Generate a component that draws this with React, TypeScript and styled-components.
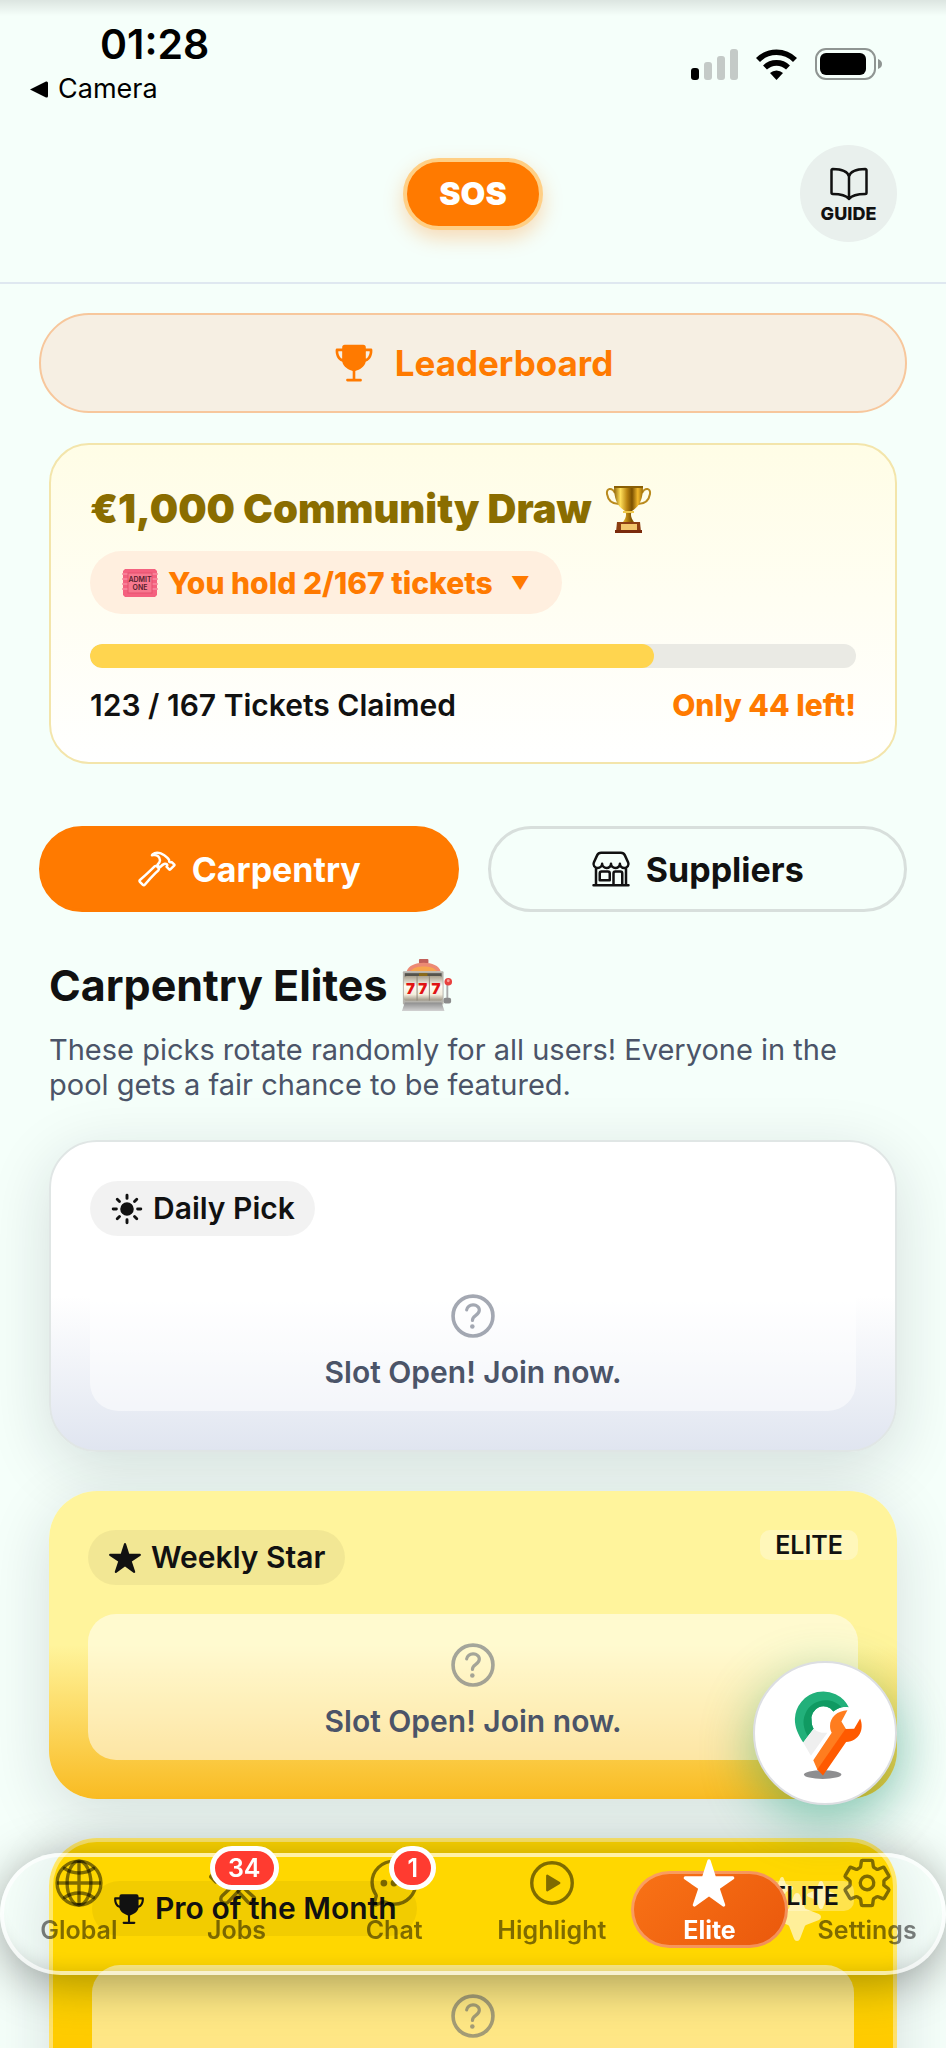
import type { ReactNode } from 'react';
import styled, { createGlobalStyle, css } from 'styled-components';
import {
  IoBookOutline,
  IoChatbubbleEllipsesOutline,
  IoConstructOutline,
  IoGlobeOutline,
  IoHammerOutline,
  IoHelpCircleOutline,
  IoPlayCircleOutline,
  IoSettingsOutline,
  IoSparkles,
  IoStar,
  IoStorefrontOutline,
  IoSunny,
  IoTrophy,
} from 'react-icons/io5';

const GlobalStyle = createGlobalStyle`
  *, *::before, *::after {
    box-sizing: border-box;
  }

  body {
    margin: 0;
    background: #f5fffa;
    color: #111;
    font-family: Inter, "Liberation Sans", sans-serif;
  }

  h1, h2, h3, p {
    margin: 0;
  }

  a {
    color: inherit;
    text-decoration: none;
  }

  button {
    font: inherit;
    color: inherit;
    cursor: pointer;
  }

  svg {
    display: block;
    flex-shrink: 0;
  }
`;

const Screen = styled.div`
  height: 100vh;
  overflow: hidden auto;
  scrollbar-width: none;
  background: linear-gradient(rgba(0, 0, 0, 0.1), rgba(0, 0, 0, 0) 16px), #f5fffa;
`;

/* Status bar */

const StatusBar = styled.div`
  display: flex;
  align-items: center;
  justify-content: space-between;
  padding: 19px 64px 0 30px;
  color: #000;
`;

const Time = styled.div`
  padding-left: 70px;
  font-size: 41px;
  font-weight: 600;
  line-height: 50px;
`;

const BackLink = styled.a`
  display: flex;
  align-items: center;
  gap: 10px;
  font-size: 27px;
  line-height: 40px;
`;

const StatusIcons = styled.div`
  display: flex;
  align-items: center;
  gap: 18px;
`;

/* Header */

const Header = styled.header`
  display: grid;
  grid-template-columns: 1fr auto 1fr;
  align-items: center;
  padding: 36px 49px 40px;
  border-bottom: 2px solid #dfe8f0;
`;

const SosButton = styled.button`
  grid-column: 2;
  height: 72px;
  padding: 0 32px;
  border: 4px solid #ffcf85;
  border-radius: 36px;
  background: #ff7a00;
  box-shadow: 0 8px 20px rgba(255, 122, 0, 0.28);
  color: #fff;
  font-size: 32px;
  font-weight: 900;
`;

const GuideButton = styled.button`
  justify-self: end;
  display: flex;
  flex-direction: column;
  align-items: center;
  justify-content: center;
  width: 97px;
  height: 97px;
  padding: 0;
  border: 0;
  border-radius: 50%;
  background: #e9f0ed;
  font-size: 18px;
  font-weight: 800;
  line-height: 20px;
`;

/* Content */

const Main = styled.main`
  display: flex;
  flex-direction: column;
  padding: 29px 39px 240px;
`;

const LeaderboardButton = styled.button`
  display: flex;
  align-items: center;
  justify-content: center;
  gap: 20px;
  height: 100px;
  border: 2px solid #f7c79c;
  border-radius: 50px;
  background: #f6efe3;
  color: #ff7a00;
  font-size: 35px;
  font-weight: 700;
`;

const DrawCard = styled.section`
  display: flex;
  flex-direction: column;
  align-items: flex-start;
  margin: 30px 10px 0;
  padding: 39px;
  border: 2px solid #f3e5ab;
  border-radius: 40px;
  background: linear-gradient(#fffde6, #fff);
`;

const DrawTitle = styled.h2`
  display: flex;
  align-items: center;
  gap: 13px;
  color: #8a6d00;
  font-size: 40px;
  font-weight: 900;
  line-height: 50px;
`;

const TicketsButton = styled.button`
  display: flex;
  align-items: center;
  gap: 10px;
  height: 63px;
  margin-top: 17px;
  padding: 0 32px;
  border: 0;
  border-radius: 32px;
  background: #ffefdf;
  color: #ff7a00;
  font-size: 30px;
  font-weight: 800;
`;

const Caret = styled.span`
  margin-left: 8px;
  font-size: 18px;
`;

const Track = styled.div`
  width: 100%;
  height: 24px;
  margin-top: 30px;
  border-radius: 12px;
  background: #eaeae4;
  overflow: hidden;
`;

const Fill = styled.div`
  height: 100%;
  border-radius: 12px;
  background: #ffd54f;
`;

const DrawStats = styled.div`
  display: flex;
  justify-content: space-between;
  width: 100%;
  margin-top: 20px;
  font-size: 30px;
  font-weight: 600;
  line-height: 35px;
`;

const Remaining = styled.span`
  color: #ff7a00;
  font-weight: 800;
`;

const Tabs = styled.div`
  display: grid;
  grid-template-columns: 1fr 1fr;
  gap: 29px;
  margin-top: 62px;
`;

const Tab = styled.button<{ $active?: boolean }>`
  display: flex;
  align-items: center;
  justify-content: center;
  gap: 15px;
  height: 86px;
  border: 3px solid ${(p) => (p.$active ? '#ff7a00' : '#d8dfdc')};
  border-radius: 43px;
  background: ${(p) => (p.$active ? '#ff7a00' : 'transparent')};
  color: ${(p) => (p.$active ? '#fff' : '#111')};
  font-size: 34px;
  font-weight: 700;
`;

const Section = styled.section`
  margin: 47px 10px 0;
`;

const SectionTitle = styled.h1`
  display: flex;
  align-items: center;
  gap: 13px;
  font-size: 43px;
  font-weight: 700;
  line-height: 52px;
`;

const Intro = styled.p`
  margin-top: 21px;
  color: #4b5468;
  font-size: 29px;
  line-height: 35px;
`;

const Picks = styled.div`
  display: flex;
  flex-direction: column;
  gap: 39px;
  margin-top: 38px;
`;

type Tone = 'daily' | 'weekly' | 'monthly';

const tones = {
  daily: css`
    border: 2px solid #e0e6e5;
    background: linear-gradient(#fff 50%, #e0e5f0);
  `,
  weekly: css`
    background: linear-gradient(#fff49c 50%, #f9bb22);
  `,
  monthly: css`
    border: 4px solid rgba(255, 255, 255, 0.42);
    background: linear-gradient(#ffd700 45%, #ffb300) border-box;
  `,
};

const PickCard = styled.article<{ $tone: Tone }>`
  position: relative;
  padding: 39px;
  border-radius: 48px;
  box-shadow: 0 16px 64px rgba(20, 30, 40, 0.14);
  ${(p) => tones[p.$tone]}
`;

const PickHead = styled.div`
  display: flex;
  align-items: flex-start;
  justify-content: space-between;
`;

const PickBadge = styled.h3`
  display: flex;
  align-items: center;
  gap: 9px;
  padding: 10px 20px;
  border-radius: 28px;
  background: rgba(0, 0, 0, 0.05);
  font-size: 30px;
  font-weight: 600;
  line-height: 35px;
`;

const EliteChip = styled.span`
  position: relative;
  padding: 0 15px;
  border-radius: 10px;
  background: rgba(255, 255, 255, 0.3);
  font-size: 25px;
  font-weight: 600;
  line-height: 30px;
`;

const Sparkle = styled(IoSparkles)`
  position: absolute;
  top: 35px;
  right: 58px;
  color: rgba(255, 255, 255, 0.6);
`;

const Slot = styled.div`
  display: flex;
  flex-direction: column;
  align-items: center;
  gap: 10px;
  margin-top: 29px;
  padding: 22px 20px 21px;
  border-radius: 28px;
  background: rgba(255, 255, 255, 0.52);
  color: #4b5468;
  font-size: 30px;
  font-weight: 600;
  line-height: 35px;

  svg {
    opacity: 0.5;
  }
`;

/* Floating parts */

const Fab = styled.button`
  position: fixed;
  right: 49px;
  bottom: 243px;
  width: 144px;
  height: 144px;
  padding: 0;
  border: 2px solid #dcdee2;
  border-radius: 50%;
  background: #fff;
  box-shadow: 0 16px 52px rgba(16, 160, 110, 0.45);
  overflow: hidden;
`;

const TabBar = styled.nav`
  position: fixed;
  left: 0;
  right: 0;
  bottom: 73px;
  display: grid;
  grid-template-columns: repeat(6, 1fr);
  padding: 3px 0 29px;
  border-radius: 61px;
  box-shadow:
    inset 0 0 0 4px rgba(255, 255, 255, 0.66),
    inset 0 -18px 18px -12px rgba(0, 0, 0, 0.14),
    0 8px 48px rgba(0, 0, 0, 0.36);
`;

const TabLink = styled.a<{ $active?: boolean }>`
  position: relative;
  display: flex;
  flex-direction: column;
  align-items: center;
  gap: 4px;
  color: ${(p) => (p.$active ? '#fff' : 'rgba(0, 0, 0, 0.5)')};
  font-size: 25px;
  font-weight: ${(p) => (p.$active ? 700 : 600)};
  line-height: 32px;

  ${(p) =>
    p.$active &&
    css`
      &::before {
        content: '';
        position: absolute;
        inset: 15px 0 -2px;
        border: 3px solid rgba(255, 255, 255, 0.32);
        border-radius: 39px;
        background: linear-gradient(135deg, #f97316, #ea580c) border-box;
      }
    `}

  svg, span {
    position: relative;
  }
`;

const Count = styled.b`
  position: absolute;
  top: -10px;
  right: calc(50% - 42px);
  min-width: 47px;
  padding: 0 13px;
  border: 5px solid #fff;
  border-radius: 22px;
  background: #ff3b30;
  color: #fff;
  font-size: 25px;
  font-weight: 600;
  line-height: 34px;
  text-align: center;
`;

function SignalIcon() {
  return (
    <svg width="47" height="31" viewBox="0 0 47 31" aria-hidden="true">
      <rect x="0" y="19" width="8" height="12" rx="3" />
      <g fill="#c4cac7">
        <rect x="13" y="13" width="8" height="18" rx="3" />
        <rect x="26" y="7" width="8" height="24" rx="3" />
        <rect x="39" y="0" width="8" height="31" rx="3" />
      </g>
    </svg>
  );
}

function WifiIcon() {
  return (
    <svg width="41" height="31" viewBox="0 0 41 31" aria-hidden="true">
      <g fill="none" stroke="#000" strokeWidth="5.6">
        <path d="M2 11A26 26 0 0 1 39 11" />
        <path d="M9 18.500A16.500 16.500 0 0 1 32 18.500" />
      </g>
      <path d="M14 24A9.500 9.500 0 0 1 27 24L20.500 31Z" />
    </svg>
  );
}

function BatteryIcon() {
  return (
    <svg width="67" height="32" viewBox="0 0 67 32" aria-hidden="true">
      <rect x="1" y="1" width="59" height="30" rx="10" fill="none" stroke="#8f9592" strokeWidth="2" />
      <rect x="5" y="5" width="46" height="22" rx="6" />
      <path d="M63 11C66 12 67 14 67 16S66 20 63 21Z" fill="#8f9592" />
    </svg>
  );
}

function TrophyEmoji() {
  return (
    <svg width="47" height="48" viewBox="0 0 47 48" role="img" aria-label="Trophy">
      <defs>
        <linearGradient id="cup">
          <stop offset="0" stopColor="#8f6408" />
          <stop offset="0.22" stopColor="#ffdf5a" />
          <stop offset="0.45" stopColor="#b98310" />
          <stop offset="0.62" stopColor="#7a5000" />
          <stop offset="0.82" stopColor="#f3b92b" />
          <stop offset="1" stopColor="#9a6a06" />
        </linearGradient>
      </defs>
      <g fill="none" stroke="#b98a1e" strokeWidth="2">
        <path d="M10 8C7 2 1 3 2 9C3 15 7 19 14 19" />
        <path d="M37 8C40 2 46 3 45 9C44 15 40 19 33 19" />
      </g>
      <path d="M9 1H38C38 14 35 21 27 26C25 29 26 33 29 37H18C21 33 22 29 20 26C12 21 9 14 9 1Z" fill="url(#cup)" />
      <path d="M9 1H38V3H9Z" fill="#8a5f05" />
      <path d="M18 26H29V28H18Z" fill="#f0c94e" />
      <path d="M12 37H35L36 47H11Z" fill="#8c3f12" />
      <rect x="16" y="39" width="16" height="6" fill="#f2c56b" />
      <path d="M10 45H37V48H10Z" fill="#7a2a0c" />
    </svg>
  );
}

function TicketEmoji() {
  return (
    <svg width="36" height="28" viewBox="0 0 36 28" role="img" aria-label="Ticket">
      <path d="M3 0H33L35 2V26L33 28H3L1 26V2Z" fill="#f4617f" />
      <path d="M0 5H36M0 10H36M0 15H36M0 20H36" stroke="#f88ba0" strokeWidth="1.500" />
      <rect x="6" y="4" width="24" height="20" fill="#f7788f" stroke="#e5506f" />
      <g fill="#54202c" fontFamily="Inter, sans-serif" fontSize="7" fontWeight="600" textAnchor="middle">
        <text x="18" y="13">ADMIT</text>
        <text x="18" y="21">ONE</text>
      </g>
    </svg>
  );
}

function SlotMachineEmoji() {
  return (
    <svg width="52" height="52" viewBox="0 0 53 55" role="img" aria-label="Slot machine">
      <defs>
        <linearGradient id="reel" x2="0" y2="1">
          <stop offset="0" stopColor="#a89f8c" />
          <stop offset="0.4" stopColor="#fffdf4" />
          <stop offset="0.75" stopColor="#f3eddd" />
          <stop offset="1" stopColor="#9d9584" />
        </linearGradient>
        <linearGradient id="base" x2="0" y2="1">
          <stop offset="0" stopColor="#8e8e8e" />
          <stop offset="1" stopColor="#d2d2d2" />
        </linearGradient>
      </defs>
      <rect x="18" y="0" width="10" height="5" rx="1" fill="#c2605a" />
      <path d="M5 13C7 7 14 4 23 4S39 7 41 13Z" fill="#ec8a74" />
      <path d="M9 13C12 9 17 8 23 8S34 9 37 13Z" fill="#f7a64e" />
      <rect x="1" y="13" width="43" height="35" rx="1" fill="#b5b3ac" />
      <rect x="3" y="15" width="39" height="4" fill="#55534c" />
      <rect x="18" y="15" width="9" height="3" fill="#8a6a18" />
      <rect x="2" y="18" width="41" height="26" rx="3" fill="url(#reel)" />
      <path d="M16 18V44M29 18V44" stroke="#8b8577" />
      <g fill="#e01313" fontFamily="Inter, sans-serif" fontSize="16" fontWeight="900" textAnchor="middle">
        <text x="9" y="37">7</text>
        <text x="22" y="37">7</text>
        <text x="36" y="37">7</text>
      </g>
      <path d="M3 46H42L45 55H0Z" fill="url(#base)" />
      <path d="M48 26V44" stroke="#aaa" strokeWidth="2" />
      <rect x="44" y="41" width="8" height="6" rx="2" fill="#8b8b8b" />
      <circle cx="49" cy="24" r="4" fill="#e8423f" />
      <circle cx="49" cy="23" r="1.500" fill="#f9a09a" />
    </svg>
  );
}

function WrenchPinLogo() {
  return (
    <svg width="140" height="140" viewBox="46 68 418 418" aria-hidden="true">
      <ellipse cx="248" cy="401" rx="56" ry="13" fill="#8e8e90" />
      <path d="M190 305C174 280 165 260 165 235A85 85 0 0 1 326 200C304 197 290 205 280 213A36 36 0 0 0 215 240C215 250 217 258 221 264Z" fill="#22b07a" />
      <path d="M203 286C190 262 187 240 196 220C210 184 252 170 284 185C294 190 301 195 304 200C294 203 286 208 280 213A36 36 0 0 0 215 240C215 250 217 258 221 264Z" fill="#109a62" />
      <path d="M221 264C234 275 248 278 262 276L213 345L190 305Z" fill="#efefef" />
      <path d="M322 209C292 210 270 230 270 256C270 264 272 271 275 276L220 358L233 388L318 266L304 243Z" fill="#ff7d1f" />
      <path d="M316 265L342 264L360 234C373 266 358 302 318 304L249 404L232 386Z" fill="#ff5a00" />
    </svg>
  );
}

interface PickProps {
  tone: Tone;
  icon: ReactNode;
  title: string;
  elite?: boolean;
  sparkle?: boolean;
}

function Pick({ tone, icon, title, elite, sparkle }: PickProps) {
  return (
    <PickCard $tone={tone}>
      {sparkle && <Sparkle size={64} />}
      <PickHead>
        <PickBadge>
          {icon}
          {title}
        </PickBadge>
        {elite && <EliteChip>ELITE</EliteChip>}
      </PickHead>
      <Slot>
        <IoHelpCircleOutline size={58} />
        <p>Slot Open! Join now.</p>
      </Slot>
    </PickCard>
  );
}

const links = [
  { label: 'Global', icon: IoGlobeOutline },
  { label: 'Jobs', icon: IoConstructOutline, count: 34 },
  { label: 'Chat', icon: IoChatbubbleEllipsesOutline, count: 1 },
  { label: 'Highlight', icon: IoPlayCircleOutline },
  { label: 'Elite', icon: IoStar, active: true },
  { label: 'Settings', icon: IoSettingsOutline },
];

const claimed = 123;
const total = 167;

export default function App() {
  return (
    <Screen>
      <GlobalStyle />
      <StatusBar>
        <div>
          <Time>01:28</Time>
          <BackLink href="#">
            <svg width="18" height="17" viewBox="0 0 18 17" aria-hidden="true">
              <path d="M0 8.500L16 0.500Q18 0 18 2V15Q18 17 16 16.500Z" />
            </svg>
            Camera
          </BackLink>
        </div>
        <StatusIcons>
          <SignalIcon />
          <WifiIcon />
          <BatteryIcon />
        </StatusIcons>
      </StatusBar>

      <Header>
        <SosButton>SOS</SosButton>
        <GuideButton>
          <IoBookOutline size={40} />
          GUIDE
        </GuideButton>
      </Header>

      <Main>
        <LeaderboardButton>
          <IoTrophy size={42} />
          Leaderboard
        </LeaderboardButton>

        <DrawCard>
          <DrawTitle>
            €1,000 Community Draw
            <TrophyEmoji />
          </DrawTitle>
          <TicketsButton>
            <TicketEmoji />
            You hold 2/{total} tickets
            <Caret>▼</Caret>
          </TicketsButton>
          <Track role="progressbar" aria-label="Tickets claimed" aria-valuenow={claimed} aria-valuemax={total}>
            <Fill style={{ width: `${(claimed / total) * 100}%` }} />
          </Track>
          <DrawStats>
            <span>{claimed} / {total} Tickets Claimed</span>
            <Remaining>Only {total - claimed} left!</Remaining>
          </DrawStats>
        </DrawCard>

        <Tabs>
          <Tab $active>
            <IoHammerOutline size={40} />
            Carpentry
          </Tab>
          <Tab>
            <IoStorefrontOutline size={40} />
            Suppliers
          </Tab>
        </Tabs>

        <Section>
          <SectionTitle>
            Carpentry Elites
            <SlotMachineEmoji />
          </SectionTitle>
          <Intro>
            These picks rotate randomly for all users! Everyone in the pool gets a fair chance to be featured.
          </Intro>
          <Picks>
            <Pick tone="daily" icon={<IoSunny size={34} />} title="Daily Pick" />
            <Pick tone="weekly" icon={<IoStar size={34} />} title="Weekly Star" elite />
            <Pick tone="monthly" icon={<IoTrophy size={34} />} title="Pro of the Month" elite sparkle />
          </Picks>
        </Section>
      </Main>

      <Fab aria-label="Find a pro">
        <WrenchPinLogo />
      </Fab>

      <TabBar>
        {links.map(({ label, icon: Icon, count, active }) => (
          <TabLink key={label} href="#" $active={active}>
            <Icon size={54} />
            <span>{label}</span>
            {count && <Count>{count}</Count>}
          </TabLink>
        ))}
      </TabBar>
    </Screen>
  );
}
